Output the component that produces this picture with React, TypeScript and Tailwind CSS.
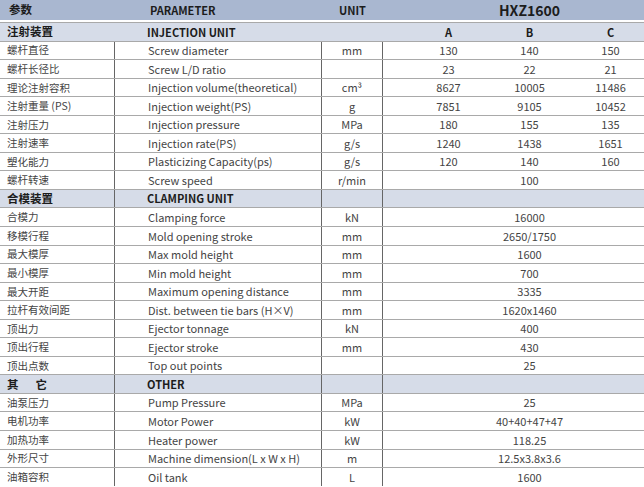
type Row = {
  cn: string;
  en: string;
  unit: string;
  vals: string[];
};

const injection: Row[] = [
  { cn: "螺杆直径", en: "Screw diameter", unit: "mm", vals: ["130", "140", "150"] },
  { cn: "螺杆长径比", en: "Screw L/D ratio", unit: "", vals: ["23", "22", "21"] },
  { cn: "理论注射容积", en: "Injection volume(theoretical)", unit: "cm³", vals: ["8627", "10005", "11486"] },
  { cn: "注射重量 (PS)", en: "Injection weight(PS)", unit: "g", vals: ["7851", "9105", "10452"] },
  { cn: "注射压力", en: "Injection pressure", unit: "MPa", vals: ["180", "155", "135"] },
  { cn: "注射速率", en: "Injection rate(PS)", unit: "g/s", vals: ["1240", "1438", "1651"] },
  { cn: "塑化能力", en: "Plasticizing Capacity(ps)", unit: "g/s", vals: ["120", "140", "160"] },
  { cn: "螺杆转速", en: "Screw speed", unit: "r/min", vals: ["100"] },
];

const clamping: Row[] = [
  { cn: "合模力", en: "Clamping force", unit: "kN", vals: ["16000"] },
  { cn: "移模行程", en: "Mold opening stroke", unit: "mm", vals: ["2650/1750"] },
  { cn: "最大模厚", en: "Max mold height", unit: "mm", vals: ["1600"] },
  { cn: "最小模厚", en: "Min mold height", unit: "mm", vals: ["700"] },
  { cn: "最大开距", en: "Maximum opening distance", unit: "mm", vals: ["3335"] },
  { cn: "拉杆有效间距", en: "Dist. between tie bars (H×V)", unit: "mm", vals: ["1620x1460"] },
  { cn: "顶出力", en: "Ejector tonnage", unit: "kN", vals: ["400"] },
  { cn: "顶出行程", en: "Ejector stroke", unit: "mm", vals: ["430"] },
  { cn: "顶出点数", en: "Top out points", unit: "", vals: ["25"] },
];

const other: Row[] = [
  { cn: "油泵压力", en: "Pump Pressure", unit: "MPa", vals: ["25"] },
  { cn: "电机功率", en: "Motor Power", unit: "kW", vals: ["40+40+47+47"] },
  { cn: "加热功率", en: "Heater power", unit: "kW", vals: ["118.25"] },
  { cn: "外形尺寸", en: "Machine dimension(L x W x H)", unit: "m", vals: ["12.5x3.8x3.6"] },
  { cn: "油箱容积", en: "Oil tank", unit: "L", vals: ["1600"] },
];

const DataRow = ({ row }: { row: Row }) => (
  <div className="flex h-[18.55px] border-t border-[#a9a9a9] text-[11px] text-[#444]">
    <div className="w-[115px] shrink-0 border-r border-[#666] pl-[7px] flex items-center text-[10.5px]">{row.cn}</div>
    <div className="w-[207px] shrink-0 border-r border-[#666] pl-[33px] flex items-center">{row.en}</div>
    <div className="w-[61px] shrink-0 border-r border-[#666] flex items-center justify-center">{row.unit}</div>
    <div className="flex-1 pl-[25px] flex items-center">
      {row.vals.map((v, i) => (
        <div key={i} className="flex-1 text-center">{v}</div>
      ))}
    </div>
  </div>
);

const SectionRow = ({ cn, en, lines = true }: { cn: React.ReactNode; en: string; lines?: boolean }) => (
  <div className="flex h-[18.55px] border-t border-[#a9a9a9] bg-[#d6dce8] text-[11px] font-bold text-[#1c1c1c]">
    <div className={`w-[115px] shrink-0 pl-[7px] flex items-center text-[11.5px] ${lines ? "border-r border-[#666]" : ""}`}>{cn}</div>
    <div className={`w-[207px] shrink-0 pl-[32px] flex items-center ${lines ? "border-r border-[#666]" : ""}`}>{en}</div>
    <div className={`w-[61px] shrink-0 ${lines ? "border-r border-[#666]" : ""}`} />
    <div className="flex-1 pl-[25px] flex items-center">
      {!lines && (
        <>
          <div className="flex-1 text-center">A</div>
          <div className="flex-1 text-center">B</div>
          <div className="flex-1 text-center">C</div>
        </>
      )}
    </div>
  </div>
);

export default function App() {
  return (
    <div className="w-[644px] h-[487px] overflow-hidden bg-white font-['Noto_Sans_CJK_SC','Noto_Sans',sans-serif]">
      <div className="w-[651px]">
        <div className="flex h-[20px] bg-[#a9b7d0] text-[11px] font-bold text-[#1c1c1c]">
          <div className="w-[115px] shrink-0 pl-[9px] flex items-center text-[11.5px]">参数</div>
          <div className="w-[207px] shrink-0 pl-[35px] flex items-center">PARAMETER</div>
          <div className="w-[61px] shrink-0 flex items-center justify-center">UNIT</div>
          <div className="flex-1 pl-[25px] flex items-center justify-center text-[14px]">HXZ1600</div>
        </div>
        <div className="h-[2px]" />
        <SectionRow cn="注射装置" en="INJECTION UNIT" lines={false} />
        {injection.map((r) => (
          <DataRow key={r.cn} row={r} />
        ))}
        <SectionRow cn="合模装置" en="CLAMPING UNIT" />
        {clamping.map((r) => (
          <DataRow key={r.cn} row={r} />
        ))}
        <SectionRow
          cn={
            <>
              其<span className="ml-[17px]">它</span>
            </>
          }
          en="OTHER"
        />
        {other.map((r) => (
          <DataRow key={r.cn} row={r} />
        ))}
      </div>
    </div>
  );
}
